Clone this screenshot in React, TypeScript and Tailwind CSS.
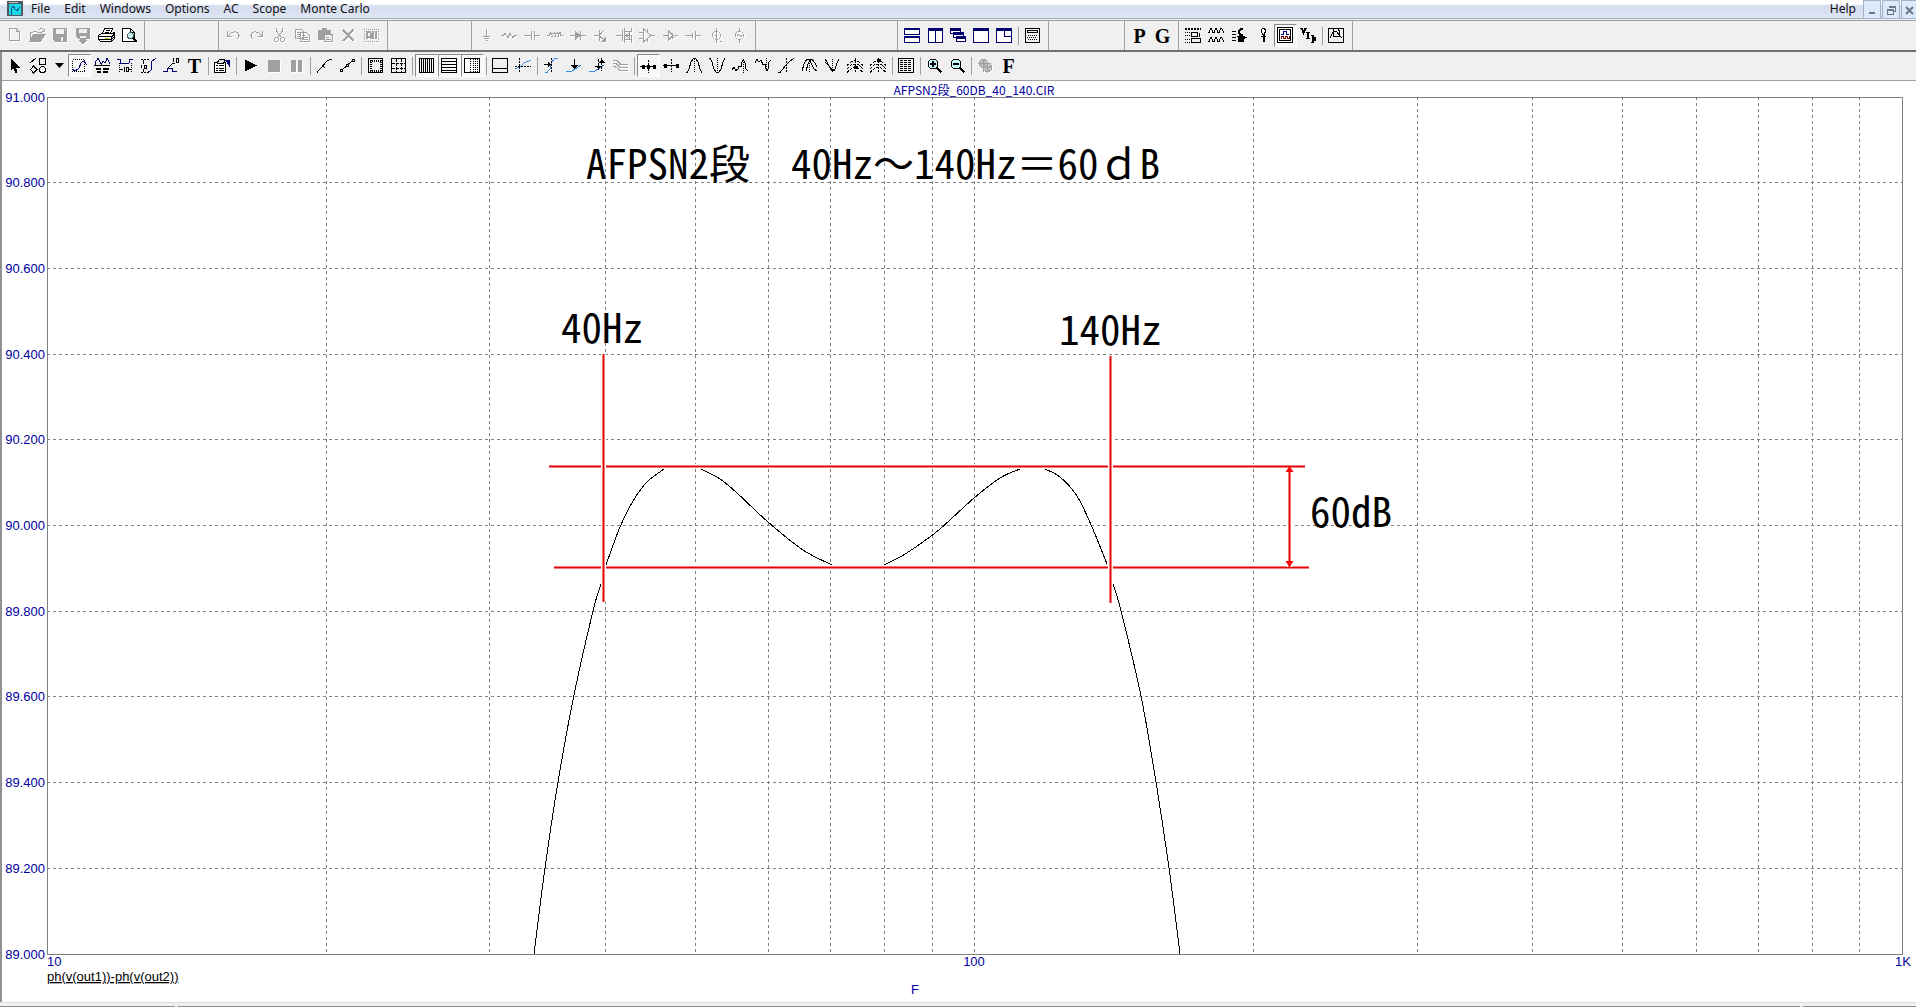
import type { ReactNode } from "react";

const GRAY = "#a0a0a0";
const NAVY = "#000070";
const BLUE = "#3a8fe0";

// 17x17 toolbar glyphs, drawn in currentColor unless a part has its own colour
const icons: Record<string, ReactNode> = {
    new: <path d="M3.5 1.5H10.5L13.5 4.5V13.5H3.5ZM10.5 1.5V4.5H13.5" />,
    open: (
        <>
            <path d="M1.5 13.5V5.5H3.5L4.5 4.5H7.5L8.5 5.5H12.5V7.5M9.5 3.5L11.5 1.5H13.5L15.5 3.5M15.5 1.5V4.5H12.5" />
            <path d="M1 14L4.5 7.5H16L12 14Z" fill="currentColor" />
        </>
    ),
    save: (
        <>
            <path d="M1 1H15V15H3L1 13Z" fill="currentColor" stroke="none" />
            <path d="M4 2H12V7H4ZM9 10H11V14H9ZM13 2H14V3H13Z" fill="#f0f0f0" stroke="none" />
        </>
    ),
    saveAs: (
        <>
            <path d="M1 1H15V12H3L1 10ZM5 12H11V13H13L8 17L3 13H5Z" fill="currentColor" stroke="none" />
            <path d="M4 2H12V6H4ZM5 9H11V11H5Z" fill="#f0f0f0" stroke="none" />
        </>
    ),
    print: (
        <>
            <path d="M4.5 6.5L6.5 1.5H14.5L12.5 6.5" fill="#fff" />
            <path d="M8 3.5H12M7 5.5H11" />
            <path d="M0.5 8.5L3.5 6.5H14.5L16.5 5.5V11.5L13.5 14.5H2.5L0.5 12.5Z" fill="#fff" />
            <path d="M1 9.5H13.5V14M13.5 9.5L16 7M1 12.5H13M14 12L16 10M14 10L16 8" />
            <path d="M7 11.5H11" stroke="#c0c000" />
        </>
    ),
    preview: (
        <>
            <path d="M1.5 1.5H9.5L13.5 5.5V14.5H1.5ZM9.5 1.5V5.5H13.5" fill="#fff" />
            <circle cx="9.5" cy="8.5" r="3" fill="#c8f4f4" stroke="#406060" />
            <path d="M12 11L16 15" strokeWidth="2" />
        </>
    ),
    undo: <path d="M2.5 4V9.5H7M3 9L6 6L10 4.5L13 6L14 8.5L12.5 12" />,
    redo: <path d="M14.5 4V9.5H10M14 9L11 6L7 4.5L4 6L3 8.5L4.5 12" />,
    cut: (
        <>
            <path d="M5.5 1V4L11 11M11.5 1V4L6 11" />
            <circle cx="5.5" cy="12.5" r="2" />
            <circle cx="11.5" cy="12.5" r="2" />
        </>
    ),
    copy: <path d="M1.5 2.5H7.5L9.5 4.5V11.5H1.5ZM3 5.5H6M3 7.5H6M3 9.5H6M6.5 5.5H12.5L15.5 8.5V14.5H6.5ZM8 8.5H11M8 10.5H14M8 12.5H14" />,
    paste: (
        <>
            <path d="M1 3H5V1H10V3H14V7H16V15H7V13H1Z" fill="currentColor" stroke="none" />
            <path d="M8 8H13L15 10V14H8Z" fill="#f0f0f0" stroke="none" />
            <path d="M9 10.5H12M9 12.5H14M4 4.5H11" stroke={GRAY} />
        </>
    ),
    del: <path d="M3 3L14 14M13.5 2.5L3 14" strokeWidth="2" />,
    all: (
        <>
            <path d="M1 2.5H16M1 14.5H16M1.5 2V15M15.5 2V15" strokeDasharray="1 1" />
            <path d="M3.5 12V6L4.5 4.5H6.5L7.5 6V12M4 9.5H7M10 4V12M13 4V12" strokeWidth="2" />
        </>
    ),
    ground: <path d="M8.5 2V9M5 9.5H12M6 11.5H11M7.5 13.5H10" />,
    resistor: <path d="M0 8.5H2L4 6.5L7 10.5L9 6.5L12 10.5L14 8.5H16" />,
    capacitor: <path d="M0 8.5H7M10 8.5H16M7.5 4V13M10.5 4V13" />,
    inductor: <path d="M0 8.5H2L3.5 5.5L5.5 8.5L4.5 10.5M5.5 7L7.5 5.5L8.5 8.5L7.5 10.5M8.5 7L10.5 5.5L11.5 8.5L10.5 10.5M11.5 7L13 5.5L14 8.5H16" />,
    diode: (
        <>
            <path d="M0 8.5H16M10.5 4V13" />
            <path d="M5 4V13L10 8.5Z" fill="currentColor" />
        </>
    ),
    bjt: (
        <>
            <path d="M1 8.5H6M6.5 3V14M7 7.5L11 3M7 9.5L12 14" />
            <path d="M12 11V14H9Z" fill="currentColor" />
        </>
    ),
    mosfet: <path d="M0 8.5H6M6.5 3V14M8.5 1V16M9 4.5H16M9 8.5H16M9 12.5H16M15.5 1V5M15.5 8V16M10 8.5L13 6V11Z" />,
    opamp: <path d="M0 5.5H4M0 11.5H4M4.5 2V15L12 8.5ZM8.5 2V5M8.5 12V15M12 8.5H16" />,
    buffer: <path d="M1 8.5H6M6.5 4V13L11 8.5ZM10.5 6V11L13.5 8.5M13 8.5H16" />,
    battery: <path d="M0 8.5H7M10 8.5H16M7.5 6V11M10.5 4V13" />,
    source: (
        <>
            <path d="M8.5 1V16M9 7L7 9M12 14.5H14" />
            <circle cx="8.5" cy="8.5" r="4" />
        </>
    ),
    sine: (
        <>
            <path d="M8.5 1V4M8.5 13V16M6 9L7 7L10 10L11 8" />
            <circle cx="8.5" cy="8.5" r="4" />
        </>
    ),
    tileH: (
        <g stroke={NAVY}>
            <path d="M0.5 1.5H15.5V7.5H0.5ZM0.5 9.5H15.5V15.5H0.5Z" fill="#fff" />
            <path d="M0 2H16M0 10H16" strokeWidth="2" />
        </g>
    ),
    tileV: (
        <g stroke={NAVY}>
            <path d="M1.5 1.5H15.5V15.5H1.5ZM8.5 1V15" fill="#fff" />
            <path d="M1 2.5H16" strokeWidth="3" />
        </g>
    ),
    cascade: (
        <g stroke={NAVY}>
            <path d="M0.5 1.5H10.5V6.5H0.5Z" fill="#fff" />
            <path d="M0 2.5H11" strokeWidth="3" />
            <path d="M3.5 5.5H13.5V10.5H3.5Z" fill="#fff" />
            <path d="M3 6.5H14" strokeWidth="3" />
            <path d="M6.5 9.5H15.5V14.5H6.5Z" fill="#fff" />
            <path d="M6 10.5H16" strokeWidth="3" />
        </g>
    ),
    maximize: (
        <g stroke={NAVY}>
            <path d="M0.5 1.5H15.5V15.5H0.5Z" fill="#fff" />
            <path d="M0 2.5H16" strokeWidth="3" />
        </g>
    ),
    overlap: (
        <g stroke={NAVY}>
            <path d="M0.5 1.5H15.5V15.5H0.5ZM8.5 3V9.5H15" fill="#fff" />
            <path d="M0 2.5H16" strokeWidth="3" />
        </g>
    ),
    calc: (
        <>
            <path d="M1.5 1.5H15.5V15.5H1.5ZM3.5 3.5H13.5V5.5H3.5Z" />
            <path d="M4 8.5H14M3 10.5H13M4 12.5H14" strokeDasharray="1 1" />
        </>
    ),
    components: (
        <>
            <path d="M0 2H16" strokeWidth="2" strokeDasharray="2 1" />
            <path d="M0 5.5H5M0 8.5H5M0 12.5H5M0 15.5H5" strokeDasharray="1 1" />
            <path d="M6.5 5.5H12.5V9.5H6.5ZM14.5 5.5V9.5M6.5 11.5H15.5V15.5H6.5Z" />
        </>
    ),
    waves: <path d="M0 5.5H1L2.5 1.5H3.5L5 5.5H6L7.5 1.5H8.5L10 5.5H11L12.5 1.5H13.5L16 5.5M0 14.5H1L2.5 10.5H3.5L5 14.5H6L7.5 10.5H8.5L10 14.5H11L12.5 10.5H13.5L16 14.5" />,
    wrench: (
        <>
            <path d="M1 4.5H5M1 7.5H5M1 10.5H5M1 13.5H5" />
            <path d="M8 4L10 1.5H12M8 4V6L10 7.5H12M9 7V10" strokeWidth="2" />
            <path d="M7 9.5H12L15 10.5L12 12V14.5H8Z" fill="currentColor" />
        </>
    ),
    probe: (
        <>
            <path d="M7.5 2.5L8.5 1.5H10L11 2.5V5.5L10 7H8.5L7.5 5.5Z" fill="#fff" />
            <path d="M9.5 7V15" strokeWidth="2" />
            <path d="M7 9.5H12" />
        </>
    ),
    scopeView: (
        <>
            <path d="M0.5 0.5H15.5V15.5H0.5ZM2.5 2.5H13.5V13.5H2.5Z" fill="#fff" />
            <path d="M4 7.5H6V4.5H9V7.5H12" stroke="#000090" />
            <path d="M4 12V9.5H6V11.5H8V9.5H10V11.5H12V9" stroke="#800000" />
        </>
    ),
    vid: (
        <>
            <path d="M0 1.5H3M4 1.5H7M6 5.5H10M6 11.5H10M11 8.5H14M11 15.5H14" />
            <path d="M2 1.5L3.5 6L5.5 1.5M8 5V12M12.5 8V16M14.5 10V14" strokeWidth="2" />
        </>
    ),
    graph: <path d="M0.5 1.5H15.5V15.5H0.5ZM5.5 2V9.5H11.5V4L10 2.5M2 11L5 5L8 4L12 9L14 11" />,
    pointer: <path d="M4 2V13L6.5 11L9 15.5L10 15L8.5 10.5H12Z" fill="currentColor" />,
    shapes: (
        <>
            <path d="M9.5 1.5H15.5V7.5H9.5ZM0 6L6 1M3.5 9L7 12.5L3.5 16L0.5 12.5Z" />
            <circle cx="12.5" cy="12.5" r="3" />
        </>
    ),
    scope: (
        <>
            <path d="M1.5 2.5H13.5V14.5H1.5Z" strokeDasharray="1 1" />
            <path d="M1 12L3 13.5H5L8 11L10 6L12 4.5H13L16 8" stroke={NAVY} />
        </>
    ),
    peaks: (
        <>
            <path d="M1 7.5L2 4L4 1.5L6 5L7.5 7L9 4L11 6L13 1.5L15 5L16 7" stroke={NAVY} />
            <path d="M0 8.5H16" />
            <path d="M2 12H7M9 12H15M3 15H7M9 15H14" strokeWidth="2" />
        </>
    ),
    hspan: (
        <>
            <path d="M0 2.5H3L4 6.5H12L13 2.5H16" stroke={NAVY} />
            <path d="M2.5 6V15M14.5 6V15" strokeDasharray="1 1" />
            <path d="M3 12.5H6M11 12.5H14M7.5 10V15M9.5 10.5H11V14.5H9.5Z" />
        </>
    ),
    vspan: (
        <>
            <path d="M8 15.5L11 13L12 4L16 1.5" stroke={NAVY} />
            <path d="M1 2.5H10M1 15.5H8" strokeDasharray="2 1" />
            <path d="M3.5 3V7M3.5 12V15M1.5 8V11M4.5 8H6.5V11H4.5Z" />
        </>
    ),
    tag: (
        <>
            <path d="M0 14.5H4V11.5H9V14.5H14" stroke={NAVY} />
            <path d="M5 11L10 6M10.5 1V5M13.5 1.5H15.5V5.5H13.5ZM9 6.5L12 7" />
        </>
    ),
    props: (
        <>
            <path d="M0.5 5.5H11.5V15.5H0.5ZM2 8.5H4M5 8.5H10M2 11H4M5 11H10M2 13.5H4M5 13.5H10" fill="#fff" />
            <path d="M3 6L6 2L11 3L9 7Z" fill="#ddd" />
            <path d="M11 3H15V8L13 5Z" fill={NAVY} stroke={NAVY} />
        </>
    ),
    run: <path d="M3 3V14L14 8.5Z" fill="currentColor" />,
    stop: <path d="M3 3H14V14H3Z" fill="currentColor" />,
    pause: <path d="M3 3H7V14H3ZM10 3H13V14H10Z" fill="currentColor" />,
    line: <path d="M1 15.5L4 12L6 10L10 5L12 3.5L16 2M6 8L9 11" />,
    linePts: (
        <>
            <path d="M2 14L14 3" />
            <path d="M1.5 12.5H3.5V14.5H1.5ZM7.5 7.5H9.5V9.5H7.5ZM13.5 2.5H15.5V4.5H13.5Z" fill="#fff" />
        </>
    ),
    frame: (
        <>
            <path d="M1.5 1.5H15.5V15.5H1.5Z" />
            <path d="M3 3.5H14M3 13.5H14M3.5 3V14M13.5 3V14" strokeDasharray="1 1" strokeWidth="2" />
        </>
    ),
    grid: (
        <>
            <path d="M1.5 1.5H15.5V15.5H1.5Z" />
            <path d="M6.5 2V15M11.5 2V15M2 6.5H15M2 11.5H15" strokeDasharray="3 1" />
        </>
    ),
    vlines: <path d="M1.5 1.5H15.5V15.5H1.5ZM3.5 2V15M5.5 2V15M7.5 2V15M9.5 2V15M11.5 2V15M13.5 2V15" />,
    hlines: <path d="M0.5 1.5H15.5V15.5H0.5ZM1 4.5H15M1 7.5H15M1 10.5H15M1 13.5H15" />,
    minor: (
        <>
            <path d="M0.5 1.5H15.5V15.5H0.5Z" fill="#fff" />
            <path d="M6.5 2V15M9.5 2V15M11.5 2V15M13.5 2V15" strokeDasharray="1 1" />
        </>
    ),
    baseline: <path d="M0.5 1.5H15.5V15.5H0.5ZM1 11.5H15" />,
    cursorX: (
        <>
            <path d="M0 12L6 9L9 6L16 3" stroke={BLUE} />
            <path d="M0 9.5H16M4.5 1V16" strokeDasharray="2 1" />
        </>
    ),
    goX: (
        <>
            <path d="M2 15.5H4L7 12L9 5L11 2L15 1" stroke={BLUE} />
            <path d="M8.5 1V16" strokeDasharray="2 1" />
            <path d="M1 7.5H7M5 5.5V9.5L7 7.5Z" />
        </>
    ),
    goY: (
        <>
            <path d="M0 14.5H5L9 12L15 8" stroke={BLUE} />
            <path d="M8.5 2V11M6 8.5H11L8.5 11Z" />
        </>
    ),
    goPerf: (
        <>
            <path d="M0 14.5H5L9 12L15 8" stroke={BLUE} />
            <path d="M9.5 2V14M12.5 1V14" strokeDasharray="3 1" />
            <path d="M7 9.5H11L9.5 11ZM11 5.5H15L12.5 3Z" fill="currentColor" />
        </>
    ),
    branch: <path d="M1 3.5H5L8 7.5H16M1 6.5H4L8 10.5H16M1 9.5H3L8 13.5H16M5 4L9 7" />,
    nextPt: (
        <>
            <path d="M0 9.5H16" />
            <path d="M8.5 3V16" strokeDasharray="2 1" />
            <path d="M2 8V11H4V8ZM7.5 8V11H9.5V8ZM13 8V11H15V8Z" fill="currentColor" />
        </>
    ),
    nextVal: (
        <>
            <path d="M0 8.5H16" />
            <path d="M8.5 2V15" strokeDasharray="2 1" />
            <path d="M1 7V10H3V7ZM13 7V10H15V7Z" fill="currentColor" />
        </>
    ),
    peak: (
        <>
            <path d="M0 15.5H1L3 12L5 5L7 2L8 1.5L10 2L12 5L14 12L16 15.5" />
            <path d="M8.5 2V16" strokeDasharray="1 1" />
        </>
    ),
    valley: (
        <>
            <path d="M0 1.5H1L3 5L5 12L7 15L8 15.5L10 15L12 12L14 5L16 1.5" />
            <path d="M8.5 1V15" strokeDasharray="1 1" />
        </>
    ),
    high: (
        <>
            <path d="M0 12.5L2 10.5L4 13.5L6 12L7 9L9 10L10 5L11.5 3L13 6L14 12L16 14" />
            <path d="M11.5 3V16" strokeDasharray="1 1" />
        </>
    ),
    low: (
        <>
            <path d="M0 5.5L2 2.5L4 5L6 3L8 8L10 7L11 12L12 13.5L13 12L14 5L16 3" />
            <path d="M11.5 1V14" strokeDasharray="1 1" />
        </>
    ),
    inflect: (
        <>
            <path d="M0 15.5H2L5 12L8 8L12 4L16 1.5" />
            <path d="M8.5 1V16" strokeDasharray="2 1" />
        </>
    ),
    globalHi: (
        <>
            <path d="M1 14L3 7L6 2H8L10 6L13 12L16 14M5 14L7 7L10 2H11L14 6L16 10" />
            <path d="M8.5 2V16" strokeDasharray="1 1" />
        </>
    ),
    globalLo: (
        <>
            <path d="M1 2L3 5L6 11L8 14L11 12L13 6L15 2M1 5L5 9L8 12L11 14" />
            <path d="M8.5 2V15" strokeDasharray="1 1" />
        </>
    ),
    top: (
        <>
            <path d="M0 8.5L4 5L8 3.5L12 5L16 8.5M0 12L4 8L8 7L12 8L16 12M0 15.5L5 11L8 10L11 11L16 15.5" strokeDasharray="3 1" />
            <path d="M8.5 1V16" strokeDasharray="2 1" />
            <path d="M7 9H10V11H7Z" fill="currentColor" />
        </>
    ),
    bottom: (
        <>
            <path d="M0 8.5L4 5L8 3.5L12 5L16 8.5M0 12L4 8L8 7L12 8L16 12M0 15.5L5 11L8 10L11 11L16 15.5" strokeDasharray="3 1" />
            <path d="M8.5 1V16" strokeDasharray="2 1" />
            <path d="M7 2H10V4H7Z" fill="currentColor" />
        </>
    ),
    table: (
        <>
            <path d="M0.5 1.5H15.5V15.5H0.5Z" />
            <path d="M2 3.5H14M2 5.5H14M2 7.5H14M2 9.5H14M2 11.5H14M2 13.5H14" strokeDasharray="3 1" />
        </>
    ),
    zoomIn: (
        <>
            <circle cx="7" cy="7" r="5" fill="#c8f8f8" />
            <path d="M11 11L15.5 15.5M4 7H10M7 4V10" strokeWidth="2" />
        </>
    ),
    zoomOut: (
        <>
            <circle cx="7" cy="7" r="5" fill="#c8f8f8" />
            <path d="M11 11L15.5 15.5M4 7H10" strokeWidth="2" />
        </>
    ),
    globe: (
        <>
            <circle cx="6.5" cy="6.5" r="4.5" fill="#c8c8c8" />
            <circle cx="10.5" cy="10.5" r="4.5" fill="#c8c8c8" />
            <path d="M6.5 2V15M2 6.5H14M10.5 4V15M5 10.5H15M4 4L13 14M3 9L9 3M8 14L14 8" />
        </>
    ),
};

// Letters that stand in for a drawn glyph
const letters: Record<string, string> = { text: "T", P: "P", G: "G", F: "F" };

type Tool = { id: string; label: string; off?: boolean; on?: boolean };
const sep: Tool = { id: "|", label: "" };
const t = (id: string, label: string): Tool => ({ id, label });
const off = (id: string, label: string): Tool => ({ id, label, off: true });
const on = (id: string, label: string): Tool => ({ id, label, on: true });

const fileTools = [off("new", "New"), off("open", "Open"), off("save", "Save"), off("saveAs", "Save As"), t("print", "Print"), t("preview", "Print Preview")];
const editTools = [off("undo", "Undo"), off("redo", "Redo"), off("cut", "Cut"), off("copy", "Copy"), off("paste", "Paste"), off("del", "Clear"), off("all", "Select All")];
const partTools = [
    off("ground", "Ground"), off("resistor", "Resistor"), off("capacitor", "Capacitor"), off("inductor", "Inductor"),
    off("diode", "Diode"), off("bjt", "NPN"), off("mosfet", "NMOS"), off("opamp", "Opamp"), off("buffer", "Buffer"),
    off("battery", "Battery"), off("source", "Pulse Source"), off("sine", "Sine Source"),
];
const windowTools = [t("tileH", "Tile Horizontal"), t("tileV", "Tile Vertical"), t("cascade", "Cascade"), t("maximize", "Maximize"), t("overlap", "Overlap"), sep, t("calc", "Calculator")];
const pgTools = [t("P", "Preferences"), t("G", "Global Settings")];
const analysisTools = [t("components", "Component Panel"), t("waves", "Analysis Plots"), t("wrench", "Settings"), t("probe", "Probe"), on("scopeView", "Analysis Window"), t("vid", "Node Values"), sep, t("graph", "Graph")];

const scopeTools = [
    on("scope", "Scope Mode"), t("peaks", "Waveform Buffer"), t("hspan", "Horizontal Tag"), t("vspan", "Vertical Tag"), t("tag", "Point Tag"), t("text", "Text"), sep,
    t("props", "Properties"), sep,
    t("run", "Run"), off("stop", "Stop"), off("pause", "Pause"), sep,
    t("line", "Line"), t("linePts", "Data Points"), sep,
    t("frame", "Ruler"), t("grid", "Plus Mark"), sep,
    on("vlines", "Horizontal Axis Grids"), on("hlines", "Vertical Axis Grids"), on("minor", "Minor Log Grids"), sep,
    t("baseline", "Baseline"), t("cursorX", "Horizontal Cursor"), sep,
    t("goX", "Go To X"), t("goY", "Go To Y"), t("goPerf", "Go To Performance"), off("branch", "Go To Branch"), sep,
    on("nextPt", "Next Data Point"), t("nextVal", "Next Interpolated Point"), t("peak", "Peak"), t("valley", "Valley"), t("high", "High"), t("low", "Low"),
    t("inflect", "Inflection"), t("globalHi", "Global High"), t("globalLo", "Global Low"), t("top", "Top"), t("bottom", "Bottom"), sep,
    t("table", "Numeric Output"), sep,
    t("zoomIn", "Zoom In"), t("zoomOut", "Zoom Out"), sep,
    off("globe", "Watch"), t("F", "Fourier"),
];

function ToolButton({ tool }: { tool: Tool }) {
    if (tool.id === "|") {
        return <span className="mx-0.5 h-[18px] w-px bg-[#a0a0a0]" />;
    }
    return (
        <button
            type="button"
            aria-label={tool.label}
            disabled={tool.off}
            className={
                "flex h-[23px] w-[23px] shrink-0 items-center justify-center border " +
                (tool.on ? "border-t-[#888] border-l-[#888] border-r-white border-b-white bg-[#f8f8f8] " : "border-transparent ") +
                (tool.off ? "text-[#a0a0a0] [filter:drop-shadow(1px_1px_0_#fff)]" : "text-black")
            }
        >
            {letters[tool.id] ? (
                <span className="font-['Liberation_Serif',serif] text-[20px] leading-5 font-bold">{letters[tool.id]}</span>
            ) : (
                <svg width="17" height="17" viewBox="0 0 17 17" fill="none" stroke="currentColor" shapeRendering="crispEdges" className="shrink-0">
                    {icons[tool.id]}
                </svg>
            )}
        </button>
    );
}

function Group({ tools, className }: { tools: Tool[]; className: string }) {
    return (
        <div className={"flex shrink-0 items-center border-r border-[#a0a0a0] " + className}>
            {tools.map((tool, i) => (
                <ToolButton key={i} tool={tool} />
            ))}
        </div>
    );
}

function MenuBar() {
    return (
        <nav className="flex h-[19px] items-start border-b border-[#a8adb8] bg-linear-to-b from-white from-20% via-[#d4dcee] via-35% to-[#dfe5f4] pl-[7px] text-[12px] leading-[17px] text-[#111]">
            <svg width="16" height="16" viewBox="0 0 16 16" shapeRendering="crispEdges" className="mr-px">
                <path d="M0 1H16V16H0Z" fill="#505860" />
                <path d="M2 4H14V15H2Z" fill="#18d8e8" />
                <path d="M2 2H11V3H2Z" fill="#b8c0c8" />
                <path d="M4 15V8L6 6L8 9L10 11L13 7" fill="none" stroke="#105080" />
            </svg>
            {["File", "Edit", "Windows", "Options", "AC", "Scope", "Monte Carlo"].map((name) => (
                <a key={name} href="#" className="px-[7px]">
                    {name}
                </a>
            ))}
            <a href="#" className="ml-auto px-[7px]">
                Help
            </a>
            <button type="button" aria-label="Minimize" className="flex h-[19px] w-[18px] items-center justify-center border border-[#a0b4cc] bg-[#dceaf8]">
                <svg width="12" height="12" viewBox="0 0 12 12" stroke="#68788c" strokeWidth="2">
                    <path d="M3 9H9" />
                </svg>
            </button>
            <button type="button" aria-label="Restore" className="ml-px flex h-[19px] w-[18px] items-center justify-center border border-[#a0b4cc] bg-[#dceaf8]">
                <svg width="12" height="12" viewBox="0 0 12 12" fill="none" stroke="#68788c" shapeRendering="crispEdges">
                    <path d="M4.5 4V2.5H10.5V7.5H9M4 3.5H11M2.5 5.5H8.5V10.5H2.5ZM2 6.5H9" />
                </svg>
            </button>
            <button type="button" aria-label="Close" className="ml-px flex h-[19px] w-[15px] items-center justify-center border border-r-0 border-[#a0b4cc] bg-[#dceaf8]">
                <svg width="12" height="12" viewBox="0 0 12 12" stroke="#68788c" strokeWidth="2">
                    <path d="M3 3L10 10M10 3L3 10" />
                </svg>
            </button>
        </nav>
    );
}

// Plot area inside the chart's own coordinates
const LEFT = 45;
const TOP = 16;
const WIDTH = 1855;
const HEIGHT = 857;

const xOf = (hz: number) => Math.floor(LEFT + (Math.log10(hz / 10) / 2) * WIDTH) + 0.5;
const yOf = (deg: number) => Math.floor(TOP + ((91 - deg) / 2) * HEIGHT + 0.01) + 0.5;

const decades = [20, 30, 40, 50, 60, 70, 80, 90, 100, 200, 300, 400, 500, 600, 700, 800, 900];
const degrees = [91, 90.8, 90.6, 90.4, 90.2, 90, 89.8, 89.6, 89.4, 89.2, 89];

// The trace is broken where the marker lines cross it
const trace = [
    [[532, 873], [543, 787], [556, 701], [572, 614], [591, 530], [599, 503]],
    [[604, 484], [618, 446], [631, 420], [645, 401], [662, 388]],
    [[699, 388], [718, 398], [735, 412], [766, 441], [801, 469], [830, 484]],
    [[882, 484], [900, 475], [918, 463], [938, 448], [972, 417], [998, 397], [1018, 388]],
    [[1043, 388], [1058, 396], [1075, 415], [1090, 446], [1105, 483]],
    [[1111, 503], [1119, 530], [1139, 615], [1154, 701], [1167, 787], [1178, 873]],
];

function smooth(pts: number[][]) {
    let d = `M${pts[0][0]} ${pts[0][1]}`;
    for (let i = 0; i < pts.length - 1; i++) {
        const a = pts[i - 1] ?? pts[i];
        const b = pts[i];
        const c = pts[i + 1];
        const e = pts[i + 2] ?? c;
        d += `C${b[0] + (c[0] - a[0]) / 6} ${b[1] + (c[1] - a[1]) / 6} ${c[0] - (e[0] - b[0]) / 6} ${c[1] - (e[1] - b[1]) / 6} ${c[0]} ${c[1]}`;
    }
    return d;
}

function Marker({ d }: { d: string }) {
    return (
        <g fill="none" shapeRendering="crispEdges">
            <path d={d} stroke="#fff" strokeWidth="5" />
            <path d={d} stroke="#f47c7c" strokeWidth="3" />
            <path d={d} stroke="#e00808" />
        </g>
    );
}

// Full-width characters opt out of the half-width forms around them
function Wide({ children }: { children: ReactNode }) {
    return <tspan className="[font-feature-settings:'hwid'_0,'fwid']">{children}</tspan>;
}

function Chart() {
    return (
        <svg viewBox="0 0 1914 921" className="block h-auto w-full bg-white font-['Liberation_Sans','Noto_Sans_CJK_JP',sans-serif]">
            <g fill="none" stroke="#808080" shapeRendering="crispEdges">
                {decades.map((hz) => (
                    <path key={hz} d={`M${xOf(hz)} ${TOP}V${TOP + HEIGHT}`} strokeDasharray="3 3" />
                ))}
                {degrees.slice(1, -1).map((deg) => (
                    <path key={deg} d={`M${LEFT} ${yOf(deg)}H${LEFT + WIDTH}`} strokeDasharray="3 3" />
                ))}
                <rect x={LEFT + 0.5} y={TOP + 0.5} width={WIDTH} height={HEIGHT} />
            </g>

            <g fill="none" stroke="#000" shapeRendering="crispEdges">
                {trace.map((pts, i) => (
                    <path key={i} d={smooth(pts)} />
                ))}
            </g>

            <Marker d="M547 385.5H1303" />
            <Marker d="M552 486.5H1307" />
            <Marker d="M601.5 273V521" />
            <Marker d="M1108.5 275V522" />
            <Marker d="M1287.5 387V486" />
            <path d="M1287.5 385L1291.5 391H1283.5ZM1287.5 486L1291.5 480H1283.5Z" fill="#f00" />

            <g className="fill-[#0000a0] text-[13px]">
                {degrees.map((deg) => (
                    <text key={deg} x="43" y={yOf(deg) + 4.5} textAnchor="end">
                        {deg.toFixed(3)}
                    </text>
                ))}
                <text x="45" y="885">10</text>
                <text x="972" y="885" textAnchor="middle">100</text>
                <text x="1901" y="885" textAnchor="middle">1K</text>
                <text x="913" y="913" textAnchor="middle">F</text>
            </g>
            <text x="972" y="14" textAnchor="middle" className="fill-[#0000a0] font-['Noto_Sans_CJK_JP',sans-serif] text-[12px]">
                AFPSN2段_60DB_40_140.CIR
            </text>
            <text x="45" y="900" className="fill-black text-[13px] underline">
                ph(v(out1))-ph(v(out2))
            </text>

            {/* half-width Latin forms sit on the same grid as the kanji */}
            <g className="fill-black font-['Noto_Sans_CJK_JP',sans-serif] text-[41px] [font-feature-settings:'hwid']">
                <text x="584" y="98">
                    AFPSN2<Wide>段　</Wide>40Hz<Wide>～</Wide>140Hz<Wide>＝</Wide>60<Wide>ｄ</Wide>B
                </text>
                <text x="559" y="262">40Hz</text>
                <text x="1057" y="264">140Hz</text>
                <text x="1308" y="446">60dB</text>
            </g>
        </svg>
    );
}

export default function App() {
    return (
        <div className="w-full overflow-hidden bg-[#f0f0f0] font-['Noto_Sans',sans-serif]">
            <MenuBar />
            <div className="mt-px flex h-[32px] items-stretch border-t border-b-2 border-t-[#a0a0a0] border-b-[#707070]">
                <Group tools={fileTools} className="w-[145px] pl-[3px]" />
                <Group tools={[]} className="w-[74px]" />
                <Group tools={editTools} className="w-[169px] pl-[3px]" />
                <Group tools={[]} className="w-[84px]" />
                <Group tools={partTools} className="w-[284px] pl-[3px]" />
                <Group tools={[]} className="w-[142px]" />
                <Group tools={windowTools} className="w-[151px] pl-[3px]" />
                <Group tools={[]} className="w-[76px]" />
                <Group tools={pgTools} className="w-[54px] pl-[3px]" />
                <Group tools={analysisTools} className="w-[174px] pl-[3px]" />
            </div>
            <div className="border-l-2 border-[#909090]">
                <div className="flex h-[29px] items-center border-b border-[#a0a0a0] pb-px pl-0.5">
                    <ToolButton tool={t("pointer", "Select")} />
                    <ToolButton tool={t("shapes", "Graphics")} />
                    <button type="button" aria-label="More graphics" className="flex h-[23px] w-[18px] items-center justify-center">
                        <svg width="9" height="5" viewBox="0 0 9 5">
                            <path d="M0 0H9L4.5 5Z" />
                        </svg>
                    </button>
                    {scopeTools.map((tool, i) => (
                        <ToolButton key={i} tool={tool} />
                    ))}
                </div>
                <Chart />
            </div>
            <footer className="flex h-[5px] items-end gap-[3px] border-t border-[#dcdcdc]">
                <span className="h-px w-[175px] bg-[#909090]" />
                <span className="h-px flex-1 bg-[#909090]" />
                <span className="h-px w-[113px] bg-[#909090]" />
            </footer>
        </div>
    );
}
